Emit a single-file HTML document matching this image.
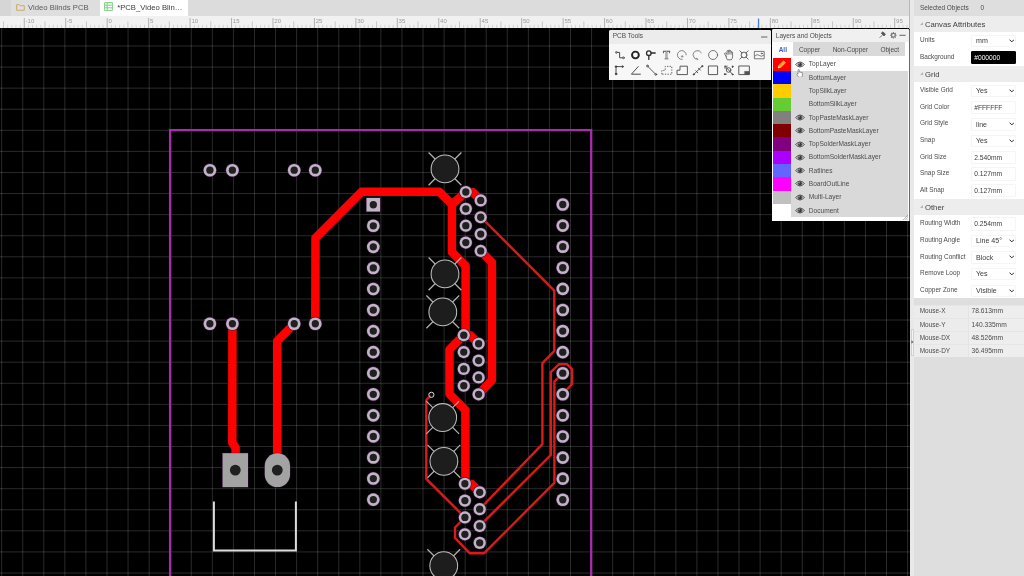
<!DOCTYPE html>
<html lang="en">
<head>
<meta charset="utf-8">
<title>PCB_Video Blinds - PCB Editor</title>
<style>
*{box-sizing:border-box;margin:0;padding:0}
html,body{width:1024px;height:576px;overflow:hidden;background:#000}
body{position:relative;font-family:"Liberation Sans",sans-serif;font-size:6.45px;color:#444;line-height:1}
.abs{position:absolute}
#tabs,#rulerw,#toolsw,#layersw,#rp{will-change:transform}
#rulerw{left:0;top:15px;width:910px;height:14px}
#toolsw{left:609px;top:29px;width:163px;height:53px}
#layersw{left:772px;top:28px;width:139px;height:195px}
svg{display:block;overflow:hidden}
/* canvas */
#canvas{left:0;top:0;width:910px;height:576px;background:#000}
/* tab bar */
#tabs{left:0;top:0;width:910px;height:15.8px;background:#dcdcdc}
#tabs .t{position:absolute;top:0;height:15.8px;font-size:7.7px;white-space:nowrap}
#tabs .t span{position:absolute;top:3.9px}
#tab1{left:10.5px;width:89.5px;background:#dedede;color:#5a5a5a}
#tab2{left:99.8px;width:88px;background:#fff;color:#3c3c3c}
#tab0{left:0;width:10.5px;background:#d6d6d6}
/* ruler */
#ruler{left:0;top:.8px;width:910px;height:12.1px;background:#f1f1f1}
/* floating windows */
.win{background:#f7f7f7;border-radius:2px 2px 0 0;overflow:hidden}
.win .title{position:absolute;left:0;top:0;right:0;height:14px;background:#ececec;color:#4a4a4a;font-size:6.5px}
#tools{left:.2px;top:.6px;width:161.6px;height:50.8px}
#layers{left:0;top:.9px;width:137.8px;height:192.6px;background:#fff;border-right:1.4px solid #6a6a6a}
#layers .title{background:#f0f0f0;height:13.2px}
#ltabs{position:absolute;left:21.4px;top:13.4px;width:111.8px;height:13.6px;background:#d9d9d9}
#ltabs span,#lall{position:absolute;top:4.5px;font-size:6.5px;color:#4a4a4a;transform:translateX(-50%);white-space:nowrap}
#lall{color:#3f5fb8;font-weight:bold;top:17.9px}
#llist{position:absolute;left:19.2px;top:28.75px;width:116.4px;height:159.6px;background:#d9d9d9}
.sw{position:absolute;left:1.1px;width:18.2px;height:13.4px}
.ln{position:absolute;left:36.8px;font-size:6.58px;color:#4c4c4c;white-space:nowrap}
/* right panel */
#rp{left:910px;top:0;width:114px;height:576px;background:#dedede}
#rp .strip{position:absolute;left:0;top:0;width:4px;height:576px;background:#e9e9e9}
#rp .white{position:absolute;left:4px;top:15.6px;width:110px;height:282.9px;background:#fff}
#rp .hd{position:absolute;left:4px;width:110px;height:16.4px;background:#ededed;font-size:7.7px;color:#3e3e3e}
#rp .hd span{position:absolute;left:11px;top:5.2px}
#rp .hd i{position:absolute;left:6.2px;top:6.2px;width:0;height:0;border-left:3.4px solid transparent;border-bottom:3.4px solid #b5b5b5}
.lb{position:absolute;left:10px;font-size:6.45px;color:#4a4a4a;white-space:nowrap}
.in{position:absolute;left:60.8px;width:45.4px;height:12.4px;background:#fff;border:.6px solid #f5f5f5;border-radius:1px;font-size:7.1px;color:#3c3c3c;white-space:nowrap}
.in span{position:absolute;left:4.2px;top:2.4px}
.in.tx{height:13.4px;font-size:6.7px}
.in.tx span{left:2.4px;top:2.8px}
.in svg{position:absolute;right:1px;top:3.1px}
.mrow{position:absolute;left:4px;width:110px;height:13.3px;background:#ececec;border-top:.5px solid #e6e6e6}
.mrow b{position:absolute;left:54.4px;top:0;width:55.6px;height:100%;background:#eeeeee;border-left:.5px solid #e4e4e4}
.mrow span{position:absolute;top:2.9px;font-size:6.45px;color:#4a4a4a}
</style>
</head>
<body>

<!-- ======================= CANVAS ======================= -->
<div id="canvas" class="abs">
<svg width="910" height="576" viewBox="0 0 910 576">
<path d="M1.66 0V576M22.73 0V576M43.8 0V576M64.86 0V576M85.93 0V576M107 0V576M128.07 0V576M149.14 0V576M170.2 0V576M191.27 0V576M212.34 0V576M233.41 0V576M254.48 0V576M275.54 0V576M296.61 0V576M317.68 0V576M338.75 0V576M359.82 0V576M380.88 0V576M401.95 0V576M423.02 0V576M444.09 0V576M465.16 0V576M486.22 0V576M507.29 0V576M528.36 0V576M549.43 0V576M570.5 0V576M591.56 0V576M612.63 0V576M633.7 0V576M654.77 0V576M675.84 0V576M696.9 0V576M717.97 0V576M739.04 0V576M760.11 0V576M781.18 0V576M802.24 0V576M823.31 0V576M844.38 0V576M865.45 0V576M886.52 0V576M907.58 0V576" stroke="#fff" stroke-opacity=".165" stroke-width="1" fill="none"/><path d="M0 24.92H910M0 46H910M0 67.08H910M0 88.16H910M0 109.24H910M0 130.32H910M0 151.4H910M0 172.48H910M0 193.56H910M0 214.64H910M0 235.72H910M0 256.8H910M0 277.88H910M0 298.96H910M0 320.04H910M0 341.12H910M0 362.2H910M0 383.28H910M0 404.36H910M0 425.44H910M0 446.52H910M0 467.6H910M0 488.68H910M0 509.76H910M0 530.84H910M0 551.92H910M0 573H910" stroke="#fff" stroke-opacity=".165" stroke-width="1" fill="none"/>
<path d="M170.1 580V130.1H591.2V580" stroke="#a82cac" stroke-width="2.3" fill="none"/>
<path d="M213.9 502.4V550.4H295.9V502.4" stroke="#dcdcdc" stroke-width="2" fill="none" stroke-linecap="square"/>
<path d="M315.3 323.75L315.5 238L361.6 191.8L439.4 191.8L451.9 204.3L451.9 252L465.6 265.7L465.6 333L463.75 335.2" stroke="#ff0000" stroke-width="8.5" fill="none" stroke-linejoin="round" stroke-linecap="round"/>
<path d="M465.8 192L451.9 204.6" stroke="#ff0000" stroke-width="8.5" fill="none" stroke-linejoin="round" stroke-linecap="round"/>
<path d="M465.8 192L472.8 192.2L480.6 200.4" stroke="#ff0000" stroke-width="8.5" fill="none" stroke-linejoin="round" stroke-linecap="round"/>
<path d="M480.6 251L491.9 262.3L491.9 380.2L478.6 394.3" stroke="#ff0000" stroke-width="8.5" fill="none" stroke-linejoin="round" stroke-linecap="round"/>
<path d="M463.75 335.2L449.5 349.4L449.5 394L465.4 409.9L465.4 482L464.9 483.75L471.6 484L479.7 492.3" stroke="#ff0000" stroke-width="8.5" fill="none" stroke-linejoin="round" stroke-linecap="round"/>
<path d="M463.75 335.2L470.8 335.6L478.6 343.75" stroke="#ff0000" stroke-width="8.5" fill="none" stroke-linejoin="round" stroke-linecap="round"/>
<path d="M232.4 323.75L232.3 442.8L235.6 447.6L235.6 456" stroke="#ff0000" stroke-width="8.5" fill="none" stroke-linejoin="round" stroke-linecap="round"/>
<path d="M294.4 323.75L277.2 341L277.2 456" stroke="#ff0000" stroke-width="8.5" fill="none" stroke-linejoin="round" stroke-linecap="round"/>
<path d="M480.8 217L554.3 290.6L554.3 351L542.4 363.2L542.4 444.2L479.7 509" stroke="#dc1a1a" stroke-width="2.4" fill="none" stroke-linejoin="round" stroke-linecap="round"/>
<path d="M562.75 394.2L572 384L572 369.2L567 364.2L559 364.2L550.8 372.2L550.8 455L479.7 525.9" stroke="#dc1a1a" stroke-width="2.4" fill="none" stroke-linejoin="round" stroke-linecap="round"/>
<path d="M562.75 373.2L554.4 381.5L554.4 482.8L484.2 553.2L469.6 553.2L455 538L455 527.5L464.9 517.3" stroke="#dc1a1a" stroke-width="2.4" fill="none" stroke-linejoin="round" stroke-linecap="round"/>
<path d="M431.4 394.8L426.3 400L426.3 478.8L464.9 517.3" stroke="#dc1a1a" stroke-width="2.4" fill="none" stroke-linejoin="round" stroke-linecap="round"/>
<path d="M428.6 152.5L461.4 185.3M428.6 185.3L461.4 152.5" stroke="#b0b0b0" stroke-width="1.25" fill="none"/>
<circle cx="445" cy="168.9" r="13.9" fill="#1d1d1d" stroke="#bcbcbc" stroke-width="1.05"/>
<path d="M428.6 257.5L461.4 290.3M428.6 290.3L461.4 257.5" stroke="#b0b0b0" stroke-width="1.25" fill="none"/>
<circle cx="445" cy="273.9" r="13.9" fill="#1d1d1d" stroke="#bcbcbc" stroke-width="1.05"/>
<path d="M426.4 295.5L459.2 328.3M426.4 328.3L459.2 295.5" stroke="#b0b0b0" stroke-width="1.25" fill="none"/>
<circle cx="442.8" cy="311.9" r="13.9" fill="#1d1d1d" stroke="#bcbcbc" stroke-width="1.05"/>
<path d="M426.3 401.1L459.1 433.9M426.3 433.9L459.1 401.1" stroke="#b0b0b0" stroke-width="1.25" fill="none"/>
<circle cx="442.7" cy="417.5" r="13.9" fill="#1d1d1d" stroke="#bcbcbc" stroke-width="1.05"/>
<path d="M427.5 444.9L460.3 477.7M427.5 477.7L460.3 444.9" stroke="#b0b0b0" stroke-width="1.25" fill="none"/>
<circle cx="443.9" cy="461.3" r="13.9" fill="#1d1d1d" stroke="#bcbcbc" stroke-width="1.05"/>
<path d="M427.35 549.3L460.15 582.1M427.35 582.1L460.15 549.3" stroke="#b0b0b0" stroke-width="1.25" fill="none"/>
<circle cx="443.75" cy="565.7" r="13.9" fill="#1d1d1d" stroke="#bcbcbc" stroke-width="1.05"/>
<circle cx="209.9" cy="170.2" r="6.9" fill="#431846"/>
<circle cx="209.9" cy="170.2" r="6.3" fill="#c0b4c6"/>
<circle cx="209.9" cy="170.2" r="3.65" fill="#202020"/>
<circle cx="209.9" cy="323.75" r="6.9" fill="#431846"/>
<circle cx="209.9" cy="323.75" r="6.3" fill="#c0b4c6"/>
<circle cx="209.9" cy="323.75" r="3.65" fill="#202020"/>
<circle cx="232.4" cy="170.2" r="6.9" fill="#431846"/>
<circle cx="232.4" cy="170.2" r="6.3" fill="#c0b4c6"/>
<circle cx="232.4" cy="170.2" r="3.65" fill="#202020"/>
<circle cx="232.4" cy="323.75" r="6.9" fill="#431846"/>
<circle cx="232.4" cy="323.75" r="6.3" fill="#c0b4c6"/>
<circle cx="232.4" cy="323.75" r="3.65" fill="#202020"/>
<circle cx="294.2" cy="170.2" r="6.9" fill="#431846"/>
<circle cx="294.2" cy="170.2" r="6.3" fill="#c0b4c6"/>
<circle cx="294.2" cy="170.2" r="3.65" fill="#202020"/>
<circle cx="294.2" cy="323.75" r="6.9" fill="#431846"/>
<circle cx="294.2" cy="323.75" r="6.3" fill="#c0b4c6"/>
<circle cx="294.2" cy="323.75" r="3.65" fill="#202020"/>
<circle cx="315.3" cy="170.2" r="6.9" fill="#431846"/>
<circle cx="315.3" cy="170.2" r="6.3" fill="#c0b4c6"/>
<circle cx="315.3" cy="170.2" r="3.65" fill="#202020"/>
<circle cx="315.3" cy="323.75" r="6.9" fill="#431846"/>
<circle cx="315.3" cy="323.75" r="6.3" fill="#c0b4c6"/>
<circle cx="315.3" cy="323.75" r="3.65" fill="#202020"/>
<rect x="365.95" y="197.4" width="14.7" height="14.7" fill="#431846"/>
<rect x="366.55" y="198" width="13.5" height="13.5" fill="#c0b4c6"/>
<circle cx="373.3" cy="204.75" r="3.65" fill="#202020"/>
<circle cx="562.75" cy="204.5" r="6.9" fill="#431846"/>
<circle cx="562.75" cy="204.5" r="6.3" fill="#c0b4c6"/>
<circle cx="562.75" cy="204.5" r="3.65" fill="#202020"/>
<circle cx="373.3" cy="225.81" r="6.9" fill="#431846"/>
<circle cx="373.3" cy="225.81" r="6.3" fill="#c0b4c6"/>
<circle cx="373.3" cy="225.81" r="3.65" fill="#202020"/>
<circle cx="562.75" cy="225.59" r="6.9" fill="#431846"/>
<circle cx="562.75" cy="225.59" r="6.3" fill="#c0b4c6"/>
<circle cx="562.75" cy="225.59" r="3.65" fill="#202020"/>
<circle cx="373.3" cy="246.87" r="6.9" fill="#431846"/>
<circle cx="373.3" cy="246.87" r="6.3" fill="#c0b4c6"/>
<circle cx="373.3" cy="246.87" r="3.65" fill="#202020"/>
<circle cx="562.75" cy="246.68" r="6.9" fill="#431846"/>
<circle cx="562.75" cy="246.68" r="6.3" fill="#c0b4c6"/>
<circle cx="562.75" cy="246.68" r="3.65" fill="#202020"/>
<circle cx="373.3" cy="267.93" r="6.9" fill="#431846"/>
<circle cx="373.3" cy="267.93" r="6.3" fill="#c0b4c6"/>
<circle cx="373.3" cy="267.93" r="3.65" fill="#202020"/>
<circle cx="562.75" cy="267.77" r="6.9" fill="#431846"/>
<circle cx="562.75" cy="267.77" r="6.3" fill="#c0b4c6"/>
<circle cx="562.75" cy="267.77" r="3.65" fill="#202020"/>
<circle cx="373.3" cy="288.99" r="6.9" fill="#431846"/>
<circle cx="373.3" cy="288.99" r="6.3" fill="#c0b4c6"/>
<circle cx="373.3" cy="288.99" r="3.65" fill="#202020"/>
<circle cx="562.75" cy="288.86" r="6.9" fill="#431846"/>
<circle cx="562.75" cy="288.86" r="6.3" fill="#c0b4c6"/>
<circle cx="562.75" cy="288.86" r="3.65" fill="#202020"/>
<circle cx="373.3" cy="310.05" r="6.9" fill="#431846"/>
<circle cx="373.3" cy="310.05" r="6.3" fill="#c0b4c6"/>
<circle cx="373.3" cy="310.05" r="3.65" fill="#202020"/>
<circle cx="562.75" cy="309.95" r="6.9" fill="#431846"/>
<circle cx="562.75" cy="309.95" r="6.3" fill="#c0b4c6"/>
<circle cx="562.75" cy="309.95" r="3.65" fill="#202020"/>
<circle cx="373.3" cy="331.11" r="6.9" fill="#431846"/>
<circle cx="373.3" cy="331.11" r="6.3" fill="#c0b4c6"/>
<circle cx="373.3" cy="331.11" r="3.65" fill="#202020"/>
<circle cx="562.75" cy="331.04" r="6.9" fill="#431846"/>
<circle cx="562.75" cy="331.04" r="6.3" fill="#c0b4c6"/>
<circle cx="562.75" cy="331.04" r="3.65" fill="#202020"/>
<circle cx="373.3" cy="352.17" r="6.9" fill="#431846"/>
<circle cx="373.3" cy="352.17" r="6.3" fill="#c0b4c6"/>
<circle cx="373.3" cy="352.17" r="3.65" fill="#202020"/>
<circle cx="562.75" cy="352.13" r="6.9" fill="#431846"/>
<circle cx="562.75" cy="352.13" r="6.3" fill="#c0b4c6"/>
<circle cx="562.75" cy="352.13" r="3.65" fill="#202020"/>
<circle cx="373.3" cy="373.23" r="6.9" fill="#431846"/>
<circle cx="373.3" cy="373.23" r="6.3" fill="#c0b4c6"/>
<circle cx="373.3" cy="373.23" r="3.65" fill="#202020"/>
<circle cx="562.75" cy="373.22" r="6.9" fill="#431846"/>
<circle cx="562.75" cy="373.22" r="6.3" fill="#c0b4c6"/>
<circle cx="562.75" cy="373.22" r="3.65" fill="#202020"/>
<circle cx="373.3" cy="394.29" r="6.9" fill="#431846"/>
<circle cx="373.3" cy="394.29" r="6.3" fill="#c0b4c6"/>
<circle cx="373.3" cy="394.29" r="3.65" fill="#202020"/>
<circle cx="562.75" cy="394.31" r="6.9" fill="#431846"/>
<circle cx="562.75" cy="394.31" r="6.3" fill="#c0b4c6"/>
<circle cx="562.75" cy="394.31" r="3.65" fill="#202020"/>
<circle cx="373.3" cy="415.35" r="6.9" fill="#431846"/>
<circle cx="373.3" cy="415.35" r="6.3" fill="#c0b4c6"/>
<circle cx="373.3" cy="415.35" r="3.65" fill="#202020"/>
<circle cx="562.75" cy="415.4" r="6.9" fill="#431846"/>
<circle cx="562.75" cy="415.4" r="6.3" fill="#c0b4c6"/>
<circle cx="562.75" cy="415.4" r="3.65" fill="#202020"/>
<circle cx="373.3" cy="436.41" r="6.9" fill="#431846"/>
<circle cx="373.3" cy="436.41" r="6.3" fill="#c0b4c6"/>
<circle cx="373.3" cy="436.41" r="3.65" fill="#202020"/>
<circle cx="562.75" cy="436.49" r="6.9" fill="#431846"/>
<circle cx="562.75" cy="436.49" r="6.3" fill="#c0b4c6"/>
<circle cx="562.75" cy="436.49" r="3.65" fill="#202020"/>
<circle cx="373.3" cy="457.47" r="6.9" fill="#431846"/>
<circle cx="373.3" cy="457.47" r="6.3" fill="#c0b4c6"/>
<circle cx="373.3" cy="457.47" r="3.65" fill="#202020"/>
<circle cx="562.75" cy="457.58" r="6.9" fill="#431846"/>
<circle cx="562.75" cy="457.58" r="6.3" fill="#c0b4c6"/>
<circle cx="562.75" cy="457.58" r="3.65" fill="#202020"/>
<circle cx="373.3" cy="478.53" r="6.9" fill="#431846"/>
<circle cx="373.3" cy="478.53" r="6.3" fill="#c0b4c6"/>
<circle cx="373.3" cy="478.53" r="3.65" fill="#202020"/>
<circle cx="562.75" cy="478.67" r="6.9" fill="#431846"/>
<circle cx="562.75" cy="478.67" r="6.3" fill="#c0b4c6"/>
<circle cx="562.75" cy="478.67" r="3.65" fill="#202020"/>
<circle cx="373.3" cy="499.59" r="6.9" fill="#431846"/>
<circle cx="373.3" cy="499.59" r="6.3" fill="#c0b4c6"/>
<circle cx="373.3" cy="499.59" r="3.65" fill="#202020"/>
<circle cx="562.75" cy="499.76" r="6.9" fill="#431846"/>
<circle cx="562.75" cy="499.76" r="6.3" fill="#c0b4c6"/>
<circle cx="562.75" cy="499.76" r="3.65" fill="#202020"/>
<circle cx="465.8" cy="192" r="6.7" fill="#431846"/>
<circle cx="465.8" cy="192" r="6.1" fill="#c0b4c6"/>
<circle cx="465.8" cy="192" r="3.65" fill="#202020"/>
<circle cx="480.7" cy="200.4" r="6.7" fill="#431846"/>
<circle cx="480.7" cy="200.4" r="6.1" fill="#c0b4c6"/>
<circle cx="480.7" cy="200.4" r="3.65" fill="#202020"/>
<circle cx="465.8" cy="208.85" r="6.7" fill="#431846"/>
<circle cx="465.8" cy="208.85" r="6.1" fill="#c0b4c6"/>
<circle cx="465.8" cy="208.85" r="3.65" fill="#202020"/>
<circle cx="480.7" cy="217.25" r="6.7" fill="#431846"/>
<circle cx="480.7" cy="217.25" r="6.1" fill="#c0b4c6"/>
<circle cx="480.7" cy="217.25" r="3.65" fill="#202020"/>
<circle cx="465.8" cy="225.7" r="6.7" fill="#431846"/>
<circle cx="465.8" cy="225.7" r="6.1" fill="#c0b4c6"/>
<circle cx="465.8" cy="225.7" r="3.65" fill="#202020"/>
<circle cx="480.7" cy="234.1" r="6.7" fill="#431846"/>
<circle cx="480.7" cy="234.1" r="6.1" fill="#c0b4c6"/>
<circle cx="480.7" cy="234.1" r="3.65" fill="#202020"/>
<circle cx="465.8" cy="242.55" r="6.7" fill="#431846"/>
<circle cx="465.8" cy="242.55" r="6.1" fill="#c0b4c6"/>
<circle cx="465.8" cy="242.55" r="3.65" fill="#202020"/>
<circle cx="480.7" cy="250.95" r="6.7" fill="#431846"/>
<circle cx="480.7" cy="250.95" r="6.1" fill="#c0b4c6"/>
<circle cx="480.7" cy="250.95" r="3.65" fill="#202020"/>
<circle cx="463.75" cy="335.2" r="6.7" fill="#431846"/>
<circle cx="463.75" cy="335.2" r="6.1" fill="#c0b4c6"/>
<circle cx="463.75" cy="335.2" r="3.65" fill="#202020"/>
<circle cx="478.6" cy="343.75" r="6.7" fill="#431846"/>
<circle cx="478.6" cy="343.75" r="6.1" fill="#c0b4c6"/>
<circle cx="478.6" cy="343.75" r="3.65" fill="#202020"/>
<circle cx="463.75" cy="352.05" r="6.7" fill="#431846"/>
<circle cx="463.75" cy="352.05" r="6.1" fill="#c0b4c6"/>
<circle cx="463.75" cy="352.05" r="3.65" fill="#202020"/>
<circle cx="478.6" cy="360.6" r="6.7" fill="#431846"/>
<circle cx="478.6" cy="360.6" r="6.1" fill="#c0b4c6"/>
<circle cx="478.6" cy="360.6" r="3.65" fill="#202020"/>
<circle cx="463.75" cy="368.9" r="6.7" fill="#431846"/>
<circle cx="463.75" cy="368.9" r="6.1" fill="#c0b4c6"/>
<circle cx="463.75" cy="368.9" r="3.65" fill="#202020"/>
<circle cx="478.6" cy="377.45" r="6.7" fill="#431846"/>
<circle cx="478.6" cy="377.45" r="6.1" fill="#c0b4c6"/>
<circle cx="478.6" cy="377.45" r="3.65" fill="#202020"/>
<circle cx="463.75" cy="385.75" r="6.7" fill="#431846"/>
<circle cx="463.75" cy="385.75" r="6.1" fill="#c0b4c6"/>
<circle cx="463.75" cy="385.75" r="3.65" fill="#202020"/>
<circle cx="478.6" cy="394.3" r="6.7" fill="#431846"/>
<circle cx="478.6" cy="394.3" r="6.1" fill="#c0b4c6"/>
<circle cx="478.6" cy="394.3" r="3.65" fill="#202020"/>
<circle cx="464.9" cy="483.75" r="6.7" fill="#431846"/>
<circle cx="464.9" cy="483.75" r="6.1" fill="#c0b4c6"/>
<circle cx="464.9" cy="483.75" r="3.65" fill="#202020"/>
<circle cx="479.7" cy="492.3" r="6.7" fill="#431846"/>
<circle cx="479.7" cy="492.3" r="6.1" fill="#c0b4c6"/>
<circle cx="479.7" cy="492.3" r="3.65" fill="#202020"/>
<circle cx="464.9" cy="500.6" r="6.7" fill="#431846"/>
<circle cx="464.9" cy="500.6" r="6.1" fill="#c0b4c6"/>
<circle cx="464.9" cy="500.6" r="3.65" fill="#202020"/>
<circle cx="479.7" cy="509.15" r="6.7" fill="#431846"/>
<circle cx="479.7" cy="509.15" r="6.1" fill="#c0b4c6"/>
<circle cx="479.7" cy="509.15" r="3.65" fill="#202020"/>
<circle cx="464.9" cy="517.45" r="6.7" fill="#431846"/>
<circle cx="464.9" cy="517.45" r="6.1" fill="#c0b4c6"/>
<circle cx="464.9" cy="517.45" r="3.65" fill="#202020"/>
<circle cx="479.7" cy="526" r="6.7" fill="#431846"/>
<circle cx="479.7" cy="526" r="6.1" fill="#c0b4c6"/>
<circle cx="479.7" cy="526" r="3.65" fill="#202020"/>
<circle cx="464.9" cy="534.3" r="6.7" fill="#431846"/>
<circle cx="464.9" cy="534.3" r="6.1" fill="#c0b4c6"/>
<circle cx="464.9" cy="534.3" r="3.65" fill="#202020"/>
<circle cx="479.7" cy="542.85" r="6.7" fill="#431846"/>
<circle cx="479.7" cy="542.85" r="6.1" fill="#c0b4c6"/>
<circle cx="479.7" cy="542.85" r="3.65" fill="#202020"/>
<circle cx="431.4" cy="394.8" r="2.6" fill="#111" stroke="#d8d8d8" stroke-width="1"/>
<rect x="222.2" y="452.8" width="26.2" height="34.7" fill="#431846"/>
<rect x="222.6" y="453.2" width="25.4" height="33.9" fill="#a3a3a3"/>
<circle cx="235.3" cy="470.1" r="5.4" fill="#202020"/>
<rect x="264.4" y="452.8" width="26" height="34.7" rx="13" fill="#431846"/>
<rect x="264.8" y="453.2" width="25.2" height="33.9" rx="12.6" fill="#a3a3a3"/>
<circle cx="277.3" cy="470.1" r="5.4" fill="#202020"/>
</svg>
</div>

<!-- ======================= TAB BAR ======================= -->
<div id="tabs" class="abs">
  <div class="t" id="tab0"></div>
  <div class="t" id="tab1">
    <svg class="abs" style="left:5px;top:3.6px" width="9" height="7" viewBox="0 0 9 7"><path d="M.6 6.3V.7H3.2L4 1.7H8.3V6.3Z" fill="none" stroke="#c9ad6e" stroke-width="1"/></svg>
    <span style="left:17.6px">Video Blinds PCB</span>
  </div>
  <div class="t" id="tab2">
    <svg class="abs" style="left:4.6px;top:2.3px" width="9" height="9" viewBox="0 0 9 9"><path d="M.6.6H8.4V8.4H.6ZM.6 3.2H8.4M.6 5.8H8.4M3.2 .6V8.4" fill="none" stroke="#7fcf86" stroke-width="1"/></svg>
    <span style="left:17.4px">*PCB_Video Blin…</span>
  </div>
</div>

<!-- ======================= RULER ======================= -->
<div id="rulerw" class="abs"><div id="ruler" class="abs">
<svg width="910" height="12.1" viewBox="0 .5 910 12.1" font-family="Liberation Sans, sans-serif">
<path d="M7.47 9.3V12.6M11.62 9.3V12.6M15.77 9.3V12.6M19.91 9.3V12.6M28.21 9.3V12.6M32.35 9.3V12.6M36.5 9.3V12.6M40.65 9.3V12.6M48.94 9.3V12.6M53.09 9.3V12.6M57.24 9.3V12.6M61.38 9.3V12.6M69.68 9.3V12.6M73.82 9.3V12.6M77.97 9.3V12.6M82.12 9.3V12.6M90.41 9.3V12.6M94.56 9.3V12.6M98.71 9.3V12.6M102.85 9.3V12.6M111.15 9.3V12.6M115.29 9.3V12.6M119.44 9.3V12.6M123.59 9.3V12.6M131.88 9.3V12.6M136.03 9.3V12.6M140.18 9.3V12.6M144.32 9.3V12.6M152.62 9.3V12.6M156.76 9.3V12.6M160.91 9.3V12.6M165.06 9.3V12.6M173.35 9.3V12.6M177.5 9.3V12.6M181.65 9.3V12.6M185.79 9.3V12.6M194.09 9.3V12.6M198.23 9.3V12.6M202.38 9.3V12.6M206.53 9.3V12.6M214.82 9.3V12.6M218.97 9.3V12.6M223.12 9.3V12.6M227.26 9.3V12.6M235.56 9.3V12.6M239.7 9.3V12.6M243.85 9.3V12.6M248 9.3V12.6M256.29 9.3V12.6M260.44 9.3V12.6M264.59 9.3V12.6M268.73 9.3V12.6M277.03 9.3V12.6M281.17 9.3V12.6M285.32 9.3V12.6M289.47 9.3V12.6M297.76 9.3V12.6M301.91 9.3V12.6M306.06 9.3V12.6M310.2 9.3V12.6M318.5 9.3V12.6M322.64 9.3V12.6M326.79 9.3V12.6M330.94 9.3V12.6M339.23 9.3V12.6M343.38 9.3V12.6M347.53 9.3V12.6M351.67 9.3V12.6M359.97 9.3V12.6M364.11 9.3V12.6M368.26 9.3V12.6M372.41 9.3V12.6M380.7 9.3V12.6M384.85 9.3V12.6M389 9.3V12.6M393.14 9.3V12.6M401.44 9.3V12.6M405.58 9.3V12.6M409.73 9.3V12.6M413.88 9.3V12.6M422.17 9.3V12.6M426.32 9.3V12.6M430.47 9.3V12.6M434.61 9.3V12.6M442.91 9.3V12.6M447.05 9.3V12.6M451.2 9.3V12.6M455.35 9.3V12.6M463.64 9.3V12.6M467.79 9.3V12.6M471.94 9.3V12.6M476.08 9.3V12.6M484.38 9.3V12.6M488.52 9.3V12.6M492.67 9.3V12.6M496.82 9.3V12.6M505.11 9.3V12.6M509.26 9.3V12.6M513.41 9.3V12.6M517.55 9.3V12.6M525.85 9.3V12.6M529.99 9.3V12.6M534.14 9.3V12.6M538.29 9.3V12.6M546.58 9.3V12.6M550.73 9.3V12.6M554.88 9.3V12.6M559.02 9.3V12.6M567.32 9.3V12.6M571.46 9.3V12.6M575.61 9.3V12.6M579.76 9.3V12.6M588.05 9.3V12.6M592.2 9.3V12.6M596.35 9.3V12.6M600.49 9.3V12.6M608.79 9.3V12.6M612.93 9.3V12.6M617.08 9.3V12.6M621.23 9.3V12.6M629.52 9.3V12.6M633.67 9.3V12.6M637.82 9.3V12.6M641.96 9.3V12.6M650.26 9.3V12.6M654.4 9.3V12.6M658.55 9.3V12.6M662.7 9.3V12.6M670.99 9.3V12.6M675.14 9.3V12.6M679.29 9.3V12.6M683.43 9.3V12.6M691.73 9.3V12.6M695.87 9.3V12.6M700.02 9.3V12.6M704.17 9.3V12.6M712.46 9.3V12.6M716.61 9.3V12.6M720.76 9.3V12.6M724.9 9.3V12.6M733.2 9.3V12.6M737.34 9.3V12.6M741.49 9.3V12.6M745.64 9.3V12.6M753.93 9.3V12.6M758.08 9.3V12.6M762.23 9.3V12.6M766.37 9.3V12.6M774.67 9.3V12.6M778.81 9.3V12.6M782.96 9.3V12.6M787.11 9.3V12.6M795.4 9.3V12.6M799.55 9.3V12.6M803.7 9.3V12.6M807.84 9.3V12.6M816.14 9.3V12.6M820.28 9.3V12.6M824.43 9.3V12.6M828.58 9.3V12.6M836.87 9.3V12.6M841.02 9.3V12.6M845.17 9.3V12.6M849.31 9.3V12.6M857.61 9.3V12.6M861.75 9.3V12.6M865.9 9.3V12.6M870.05 9.3V12.6M878.34 9.3V12.6M882.49 9.3V12.6M886.64 9.3V12.6M890.78 9.3V12.6M899.08 9.3V12.6M903.22 9.3V12.6M907.37 9.3V12.6" stroke="#d2d2d2" stroke-width="1" fill="none"/><path d="M3.32 6V12.6M44.79 6V12.6M86.27 6V12.6M127.73 6V12.6M169.21 6V12.6M210.68 6V12.6M252.15 6V12.6M293.62 6V12.6M335.09 6V12.6M376.56 6V12.6M418.03 6V12.6M459.5 6V12.6M500.97 6V12.6M542.43 6V12.6M583.9 6V12.6M625.38 6V12.6M666.85 6V12.6M708.32 6V12.6M749.79 6V12.6M791.25 6V12.6M832.73 6V12.6M874.2 6V12.6" stroke="#c6c6c6" stroke-width="1" fill="none"/><path d="M24.06 2.5V12.6M65.53 2.5V12.6M107 2.5V12.6M148.47 2.5V12.6M189.94 2.5V12.6M231.41 2.5V12.6M272.88 2.5V12.6M314.35 2.5V12.6M355.82 2.5V12.6M397.29 2.5V12.6M438.76 2.5V12.6M480.23 2.5V12.6M521.7 2.5V12.6M563.17 2.5V12.6M604.64 2.5V12.6M646.11 2.5V12.6M687.58 2.5V12.6M729.05 2.5V12.6M770.52 2.5V12.6M811.99 2.5V12.6M853.46 2.5V12.6M894.93 2.5V12.6" stroke="#b2b2b2" stroke-width="1" fill="none"/><g font-size="6.1" fill="#9a9a9a"><text x="25.36" y="7.7">-10</text><text x="66.83" y="7.7">-5</text><text x="108.3" y="7.7">0</text><text x="149.77" y="7.7">5</text><text x="191.24" y="7.7">10</text><text x="232.71" y="7.7">15</text><text x="274.18" y="7.7">20</text><text x="315.65" y="7.7">25</text><text x="357.12" y="7.7">30</text><text x="398.59" y="7.7">35</text><text x="440.06" y="7.7">40</text><text x="481.53" y="7.7">45</text><text x="523" y="7.7">50</text><text x="564.47" y="7.7">55</text><text x="605.94" y="7.7">60</text><text x="647.41" y="7.7">65</text><text x="688.88" y="7.7">70</text><text x="730.35" y="7.7">75</text><text x="771.82" y="7.7">80</text><text x="813.29" y="7.7">85</text><text x="854.76" y="7.7">90</text><text x="896.23" y="7.7">95</text></g><path d="M758.7 3V12.6" stroke="#4c7fd2" stroke-width="1.3"/>
</svg>
</div></div>

<!-- ======================= PCB TOOLS ======================= -->
<div id="toolsw" class="abs"><div id="tools" class="abs win">
  <div class="title"><span class="abs" style="left:3.6px;top:3.8px">PCB Tools</span>
    <svg class="abs" style="left:151.6px;top:6.2px" width="7" height="2" viewBox="0 0 7 2"><path d="M0 1H6.4" stroke="#555" stroke-width=".9"/></svg>
  </div>
  <svg class="abs" style="left:0;top:13.6px" width="161.6" height="37.2" viewBox="609.2 43.2 161.6 37.2" fill="none" stroke="#4a4a4a" stroke-width=".9" stroke-linecap="round" stroke-linejoin="round">
    <!-- row 1 -->
    <g><!-- track -->
      <path d="M617.6 52.6H619.8V58H622.6" stroke-width="1"/>
      <circle cx="616.6" cy="52.6" r=".9"/><circle cx="623.6" cy="58" r=".9"/>
    </g>
    <circle cx="635.6" cy="55.2" r="3.4" stroke="#222" stroke-width="1.9"/>
    <g stroke="#2c2c2c" stroke-width="1.3"><!-- via/pad -->
      <circle cx="649" cy="53.4" r="2.3"/><path d="M649 55.8V59.6M651.4 53.2H655.4"/>
    </g>
    <text x="666.6" y="59.6" font-family="Liberation Serif, serif" font-size="11.5" text-anchor="middle" fill="none" stroke="#555" stroke-width=".55">T</text>
    <g stroke="#666" stroke-width=".8"><!-- arc -->
      <path d="M686.4 55A4.4 4.4 0 1 0 682.4 59.6"/><path d="M682.4 55.6V57.6M681.4 56.6H683.4" stroke-width=".6"/>
    </g>
    <g stroke="#666" stroke-width=".8"><!-- arc center -->
      <path d="M701.6 53A4.4 4.4 0 1 0 698 59.6"/><path d="M698 59.6L696.8 58.6" />
    </g>
    <circle cx="713.3" cy="55.2" r="4.5" stroke="#555" stroke-width=".8"/>
    <g stroke="#4a4a4a" stroke-width=".75"><!-- hand -->
      <path d="M726.2 56.2L725 54.4Q724.4 53.4 725.3 53.1Q726 52.9 726.6 53.8L727.2 54.7V51.6Q727.2 50.8 727.9 50.8Q728.6 50.8 728.6 51.6V50.9Q728.6 50.2 729.3 50.2Q730 50.2 730 50.9V51.5Q730 50.8 730.7 50.8Q731.4 50.8 731.4 51.6V52.6Q731.4 52 732.1 52Q732.8 52 732.8 52.8V56.4Q732.8 58.8 731.6 60H727.6Q726.6 59 726.2 56.2Z"/>
      <path d="M728.6 51.6V54.4M730 51.5V54.4M731.4 52.6V54.6" stroke-width=".6"/>
    </g>
    <g stroke="#4a4a4a" stroke-width=".85"><!-- hole -->
      <circle cx="744.2" cy="55.2" r="2.9"/><path d="M740 51L742.2 53.2M748.4 51L746.2 53.2M740 59.4L742.2 57.2M748.4 59.4L746.2 57.2"/>
    </g>
    <g stroke="#5a5a5a" stroke-width=".8"><!-- image -->
      <rect x="755" y="51.6" width="9.4" height="7.4"/><path d="M755.4 56Q757.4 53.6 759.4 55.6T764 55.4"/><circle cx="762" cy="53.6" r=".5" fill="#555"/>
    </g>
    <!-- row 2 -->
    <g stroke="#3c3c3c" stroke-width=".9">
      <path d="M616.2 74V66.8H623.4M622.4 65.9L623.8 66.8L622.4 67.7"/><circle cx="616.2" cy="66.8" r=".8" fill="#333"/><circle cx="616.2" cy="74.2" r=".8" fill="#333"/>
    </g>
    <path d="M638.4 66.8L631.6 74.4H640.6" stroke="#444" stroke-width=".95"/>
    <g stroke="#4a4a4a" stroke-width=".9"><path d="M648.2 66.8L655.4 74"/><circle cx="647.6" cy="66.2" r=".9"/><circle cx="656" cy="74.6" r=".9"/></g>
    <path d="M662 74.4V70.6H665.4V66.6H672V74.4Z" stroke="#4a4a4a" stroke-width=".85" stroke-dasharray="1.3 1.3" stroke-linecap="butt"/>
    <path d="M677.2 74.4V70.4H680.2V66.4H687.6V74.4Z" stroke="#4a4a4a" stroke-width=".9"/>
    <g stroke="#4a4a4a" stroke-width=".9"><path d="M694 74.6L702.4 66.4M696 71L698 73M698.6 68.4L700.6 70.4"/><circle cx="694" cy="74.6" r=".6" fill="#444"/><circle cx="702.4" cy="66.4" r=".6" fill="#444"/></g>
    <rect x="709" y="66.2" width="8.8" height="8.6" stroke="#4a4a4a" stroke-width=".9"/>
    <g stroke="#4a4a4a" stroke-width=".9"><circle cx="728.8" cy="70.2" r="2.3"/><path d="M725.4 66.6L732.6 74.4M725.2 66.4H727.4M725.2 66.4V68.6M724.8 74.4H726.6M732.8 66.6V67.8"/><circle cx="725" cy="74.4" r=".5" fill="#444"/><circle cx="732.8" cy="66.6" r=".5" fill="#444"/><circle cx="732.8" cy="74.6" r=".5" fill="#444"/></g>
    <g stroke="#4a4a4a" stroke-width=".9"><rect x="739.4" y="66.2" width="10.2" height="8.6"/><rect x="745" y="71.6" width="4.4" height="3" fill="#555" stroke-width=".5"/></g>
  </svg>
</div>

</div>
<!-- ======================= LAYERS ======================= -->
<div id="layersw" class="abs"><div id="layers" class="abs win">
  <div class="title"><span class="abs" style="left:3.8px;top:3.9px">Layers and Objects</span>
    <svg class="abs" style="left:105.6px;top:2.4px" width="28" height="9" viewBox="0 0 28 9" fill="none" stroke="#555" stroke-width=".8">
      <path d="M3.2 2.2L5 .8L7.4 3.2L6 5ZM4.2 4.2L1.6 6.8" fill="#555"/>
      <circle cx="15.4" cy="4.3" r="1.9" stroke="#777" stroke-width="1.3"/><path d="M15.4 1.1V2M15.4 6.6V7.5M12.2 4.3H13.1M17.7 4.3H18.6M13.1 2L13.8 2.7M17 5.9L17.7 6.6M13.1 6.6L13.8 5.9M17 2.7L17.7 2" stroke="#777" stroke-width="1.1"/>
      <path d="M21.4 4.3H27.6" stroke-width=".9"/>
    </svg>
  </div>
  <div id="ltabs"><span style="left:16.2px">Copper</span><span style="left:57px">Non-Copper</span><span style="left:96.4px">Object</span></div>
  <span id="lall" style="left:10.8px">All</span>
  <div id="llist">
    <div class="abs" style="left:0;top:0;width:118.4px;height:13.3px;background:#fff"></div>
  </div>
  <div class="sw" style="top:28.75px;height:13.39px;background:#ff0000"></div>
<svg class="abs" style="left:22.5px;top:31.9px" width="10" height="7" viewBox="0 0 10 7" fill="none" stroke="#555" stroke-width=".7"><path d="M.5 3.5Q5 -1.4 9.5 3.5Q5 8.4 .5 3.5Z" stroke="#444" stroke-width=".8"/><circle cx="5" cy="3.5" r="1.9" fill="#3a3a3a" stroke="none"/><circle cx="5" cy="3.5" r="2.4" stroke-width=".5"/><circle cx="4.2" cy="2.8" r=".55" fill="#ddd" stroke="none"/></svg>
<span class="ln" style="top:32.5px">TopLayer</span>
<div class="sw" style="top:42.04px;height:13.39px;background:#0000ff"></div>
<span class="ln" style="top:45.79px">BottomLayer</span>
<div class="sw" style="top:55.33px;height:13.39px;background:#ffcc00"></div>
<span class="ln" style="top:59.08px">TopSilkLayer</span>
<div class="sw" style="top:68.62px;height:13.39px;background:#66cc33"></div>
<span class="ln" style="top:72.37px">BottomSilkLayer</span>
<div class="sw" style="top:81.91px;height:13.39px;background:#808080"></div>
<svg class="abs" style="left:22.5px;top:85.06px" width="10" height="7" viewBox="0 0 10 7" fill="none" stroke="#555" stroke-width=".7"><path d="M.5 3.5Q5 -1.4 9.5 3.5Q5 8.4 .5 3.5Z" stroke="#444" stroke-width=".8"/><circle cx="5" cy="3.5" r="1.9" fill="#3a3a3a" stroke="none"/><circle cx="5" cy="3.5" r="2.4" stroke-width=".5"/><circle cx="4.2" cy="2.8" r=".55" fill="#ddd" stroke="none"/></svg>
<span class="ln" style="top:85.66px">TopPasteMaskLayer</span>
<div class="sw" style="top:95.2px;height:13.39px;background:#800000"></div>
<svg class="abs" style="left:22.5px;top:98.35px" width="10" height="7" viewBox="0 0 10 7" fill="none" stroke="#555" stroke-width=".7"><path d="M.5 3.5Q5 -1.4 9.5 3.5Q5 8.4 .5 3.5Z" stroke="#444" stroke-width=".8"/><circle cx="5" cy="3.5" r="1.9" fill="#3a3a3a" stroke="none"/><circle cx="5" cy="3.5" r="2.4" stroke-width=".5"/><circle cx="4.2" cy="2.8" r=".55" fill="#ddd" stroke="none"/></svg>
<span class="ln" style="top:98.95px">BottomPasteMaskLayer</span>
<div class="sw" style="top:108.49px;height:13.39px;background:#800080"></div>
<svg class="abs" style="left:22.5px;top:111.64px" width="10" height="7" viewBox="0 0 10 7" fill="none" stroke="#555" stroke-width=".7"><path d="M.5 3.5Q5 -1.4 9.5 3.5Q5 8.4 .5 3.5Z" stroke="#444" stroke-width=".8"/><circle cx="5" cy="3.5" r="1.9" fill="#3a3a3a" stroke="none"/><circle cx="5" cy="3.5" r="2.4" stroke-width=".5"/><circle cx="4.2" cy="2.8" r=".55" fill="#ddd" stroke="none"/></svg>
<span class="ln" style="top:112.24px">TopSolderMaskLayer</span>
<div class="sw" style="top:121.78px;height:13.39px;background:#aa00ff"></div>
<svg class="abs" style="left:22.5px;top:124.93px" width="10" height="7" viewBox="0 0 10 7" fill="none" stroke="#555" stroke-width=".7"><path d="M.5 3.5Q5 -1.4 9.5 3.5Q5 8.4 .5 3.5Z" stroke="#444" stroke-width=".8"/><circle cx="5" cy="3.5" r="1.9" fill="#3a3a3a" stroke="none"/><circle cx="5" cy="3.5" r="2.4" stroke-width=".5"/><circle cx="4.2" cy="2.8" r=".55" fill="#ddd" stroke="none"/></svg>
<span class="ln" style="top:125.53px">BottomSolderMaskLayer</span>
<div class="sw" style="top:135.07px;height:13.39px;background:#6464ff"></div>
<svg class="abs" style="left:22.5px;top:138.22px" width="10" height="7" viewBox="0 0 10 7" fill="none" stroke="#555" stroke-width=".7"><path d="M.5 3.5Q5 -1.4 9.5 3.5Q5 8.4 .5 3.5Z" stroke="#444" stroke-width=".8"/><circle cx="5" cy="3.5" r="1.9" fill="#3a3a3a" stroke="none"/><circle cx="5" cy="3.5" r="2.4" stroke-width=".5"/><circle cx="4.2" cy="2.8" r=".55" fill="#ddd" stroke="none"/></svg>
<span class="ln" style="top:138.82px">Ratlines</span>
<div class="sw" style="top:148.36px;height:13.39px;background:#ff00ff"></div>
<svg class="abs" style="left:22.5px;top:151.51px" width="10" height="7" viewBox="0 0 10 7" fill="none" stroke="#555" stroke-width=".7"><path d="M.5 3.5Q5 -1.4 9.5 3.5Q5 8.4 .5 3.5Z" stroke="#444" stroke-width=".8"/><circle cx="5" cy="3.5" r="1.9" fill="#3a3a3a" stroke="none"/><circle cx="5" cy="3.5" r="2.4" stroke-width=".5"/><circle cx="4.2" cy="2.8" r=".55" fill="#ddd" stroke="none"/></svg>
<span class="ln" style="top:152.11px">BoardOutLine</span>
<div class="sw" style="top:161.65px;height:13.39px;background:#c0c0c0"></div>
<svg class="abs" style="left:22.5px;top:164.8px" width="10" height="7" viewBox="0 0 10 7" fill="none" stroke="#555" stroke-width=".7"><path d="M.5 3.5Q5 -1.4 9.5 3.5Q5 8.4 .5 3.5Z" stroke="#444" stroke-width=".8"/><circle cx="5" cy="3.5" r="1.9" fill="#3a3a3a" stroke="none"/><circle cx="5" cy="3.5" r="2.4" stroke-width=".5"/><circle cx="4.2" cy="2.8" r=".55" fill="#ddd" stroke="none"/></svg>
<span class="ln" style="top:165.4px">Multi-Layer</span>
<div class="sw" style="top:174.94px;height:16px;background:#ffffff"></div>
<svg class="abs" style="left:22.5px;top:178.09px" width="10" height="7" viewBox="0 0 10 7" fill="none" stroke="#555" stroke-width=".7"><path d="M.5 3.5Q5 -1.4 9.5 3.5Q5 8.4 .5 3.5Z" stroke="#444" stroke-width=".8"/><circle cx="5" cy="3.5" r="1.9" fill="#3a3a3a" stroke="none"/><circle cx="5" cy="3.5" r="2.4" stroke-width=".5"/><circle cx="4.2" cy="2.8" r=".55" fill="#ddd" stroke="none"/></svg>
<span class="ln" style="top:178.69px">Document</span>
<svg class="abs" style="left:5px;top:31px" width="10" height="9" viewBox="0 0 10 9"><path d="M1 8L1.8 5.4L6.6 .8L8.6 2.8L3.8 7.4Z" fill="#f7a62b" stroke="#ffd27a" stroke-width=".5"/><path d="M1 8L1.6 6.2L2.9 7.5Z" fill="#fff3d0"/></svg>
  <svg class="abs" style="left:131.4px;top:186.4px" width="5" height="5" viewBox="0 0 5 5"><path d="M0 5L5 0M1.8 5L5 1.8M3.6 5L5 3.6" stroke="#8a8a8a" stroke-width=".6"/></svg>
</div>

</div>
<!-- cursor -->
<svg class="abs" style="left:795.7px;top:68.5px" width="7.2" height="8.8" viewBox="0 0 9 11"><path d="M2.6 5.4V1.2Q2.6 .5 3.3 .5Q4 .5 4 1.2V4Q4 3.5 4.7 3.5Q5.4 3.5 5.4 4.2Q5.4 3.8 6.1 3.8Q6.8 3.8 6.8 4.6Q6.8 4.3 7.4 4.3Q8 4.3 8 5V7.4Q8 9.4 6.8 10.3H3.6Q2.6 9.4 1.4 7.2Q.8 6.2 1.5 5.9Q2.1 5.7 2.6 6.4Z" fill="#fff" stroke="#6a6a6a" stroke-width=".85"/></svg>

<!-- ======================= RIGHT PANEL ======================= -->
<div id="rp" class="abs">
  <div class="strip"></div>
  <div class="abs" style="left:-.9px;top:0;width:1px;height:29px;background:#b8b8b8"></div>
  <div class="abs" style="left:.6px;top:329px;width:3px;height:26.6px;background:#f3f3f3;border:.5px solid #d0d0d0"></div>
  <svg class="abs" style="left:.9px;top:340px" width="3" height="4" viewBox="0 0 3 4"><path d="M.4 .2L2.6 2L.4 3.8Z" fill="#666"/></svg>
  <div class="white"></div>
  <span class="lb" style="top:4.6px;color:#4a4a4a">Selected Objects</span><span class="lb" style="left:70.6px;top:4.6px">0</span>
  <div class="hd" style="top:15.6px"><i></i><span>Canvas Attributes</span></div>
<span class="lb" style="top:37.15px">Units</span>
<div class="in" style="top:34.95px"><span>mm</span><svg width="5.6" height="3.6" viewBox="0 0 5.6 3.6"><path d="M.5 .6L2.8 2.9L5.1 .6" fill="none" stroke="#2a2a2a" stroke-width="1"/></svg></div>
<span class="lb" style="top:53.8px">Background</span>
<div class="in tx" style="top:51.2px;background:#000;border-color:#000;color:#fff;height:13.3px"><span>#000000</span></div>
<div class="hd" style="top:65.55px"><i></i><span>Grid</span></div>
<span class="lb" style="top:87.1px">Visible Grid</span>
<div class="in" style="top:84.9px"><span>Yes</span><svg width="5.6" height="3.6" viewBox="0 0 5.6 3.6"><path d="M.5 .6L2.8 2.9L5.1 .6" fill="none" stroke="#2a2a2a" stroke-width="1"/></svg></div>
<span class="lb" style="top:103.75px">Grid Color</span>
<div class="in tx" style="top:100.85px"><span>#FFFFFF</span></div>
<span class="lb" style="top:120.4px">Grid Style</span>
<div class="in" style="top:118.2px"><span>line</span><svg width="5.6" height="3.6" viewBox="0 0 5.6 3.6"><path d="M.5 .6L2.8 2.9L5.1 .6" fill="none" stroke="#2a2a2a" stroke-width="1"/></svg></div>
<span class="lb" style="top:137.05px">Snap</span>
<div class="in" style="top:134.85px"><span>Yes</span><svg width="5.6" height="3.6" viewBox="0 0 5.6 3.6"><path d="M.5 .6L2.8 2.9L5.1 .6" fill="none" stroke="#2a2a2a" stroke-width="1"/></svg></div>
<span class="lb" style="top:153.7px">Grid Size</span>
<div class="in tx" style="top:150.8px"><span>2.540mm</span></div>
<span class="lb" style="top:170.35px">Snap Size</span>
<div class="in tx" style="top:167.45px"><span>0.127mm</span></div>
<span class="lb" style="top:187px">Alt Snap</span>
<div class="in tx" style="top:184.1px"><span>0.127mm</span></div>
<div class="hd" style="top:198.75px"><i></i><span>Other</span></div>
<span class="lb" style="top:220.3px">Routing Width</span>
<div class="in tx" style="top:217.4px"><span>0.254mm</span></div>
<span class="lb" style="top:236.95px">Routing Angle</span>
<div class="in" style="top:234.75px"><span>Line 45&deg;</span><svg width="5.6" height="3.6" viewBox="0 0 5.6 3.6"><path d="M.5 .6L2.8 2.9L5.1 .6" fill="none" stroke="#2a2a2a" stroke-width="1"/></svg></div>
<span class="lb" style="top:253.6px">Routing Conflict</span>
<div class="in" style="top:251.4px"><span>Block</span><svg width="5.6" height="3.6" viewBox="0 0 5.6 3.6"><path d="M.5 .6L2.8 2.9L5.1 .6" fill="none" stroke="#2a2a2a" stroke-width="1"/></svg></div>
<span class="lb" style="top:270.25px">Remove Loop</span>
<div class="in" style="top:268.05px"><span>Yes</span><svg width="5.6" height="3.6" viewBox="0 0 5.6 3.6"><path d="M.5 .6L2.8 2.9L5.1 .6" fill="none" stroke="#2a2a2a" stroke-width="1"/></svg></div>
<span class="lb" style="top:286.9px">Copper Zone</span>
<div class="in" style="top:284.7px"><span>Visible</span><svg width="5.6" height="3.6" viewBox="0 0 5.6 3.6"><path d="M.5 .6L2.8 2.9L5.1 .6" fill="none" stroke="#2a2a2a" stroke-width="1"/></svg></div>
<div class="mrow" style="top:304.5px"><b></b><span style="left:5.7px">Mouse-X</span><span style="left:57.6px;font-size:6.65px">78.613mm</span></div>
<div class="mrow" style="top:317.72px"><b></b><span style="left:5.7px">Mouse-Y</span><span style="left:57.6px;font-size:6.65px">140.335mm</span></div>
<div class="mrow" style="top:330.94px"><b></b><span style="left:5.7px">Mouse-DX</span><span style="left:57.6px;font-size:6.65px">48.526mm</span></div>
<div class="mrow" style="top:344.16px"><b></b><span style="left:5.7px">Mouse-DY</span><span style="left:57.6px;font-size:6.65px">36.495mm</span></div>
</div>

</body>
</html>
